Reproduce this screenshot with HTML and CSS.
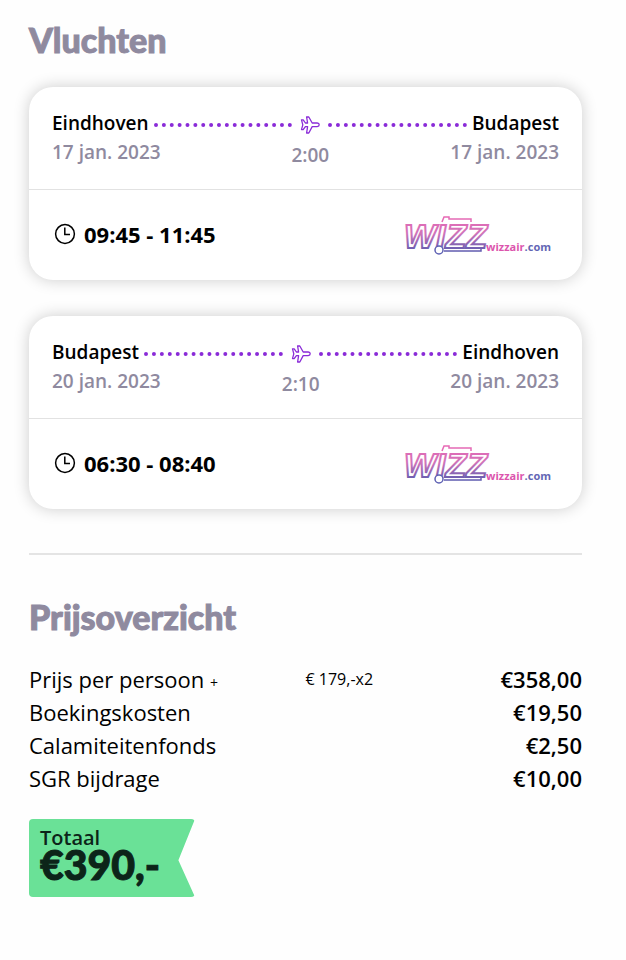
FILE: index.html
```html
<!DOCTYPE html>
<html lang="nl">
<head>
    <meta charset="UTF-8">
    <meta name="viewport" content="width=device-width, initial-scale=1.0">
    <title>Vluchten en prijsoverzicht</title>
    <link rel="stylesheet" href="styles.css">
</head>
<body>
    <!-- shared icons -->
    <svg class="sprite" aria-hidden="true">
        <defs>
            <linearGradient id="wizz-gradient" gradientUnits="userSpaceOnUse" x1="0" y1="0" x2="0" y2="44">
                <stop offset="0.1" stop-color="#e868b4"/>
                <stop offset="0.5" stop-color="#cf74ba"/>
                <stop offset="0.95" stop-color="#4f58ae"/>
            </linearGradient>
        </defs>
        <symbol id="icon-plane" viewBox="0 0 20 18">
            <path d="M1.5 3.8H3.2L5.4 7H7.6L6.6 1H8.8L12.2 7H17.2Q19.2 7.2 19.2 8.8Q19.2 10.4 17.2 10.6H12.2L8.8 17H6.6L7.6 10.6H5.4L3.2 13.6H1.5L2.8 8.8Z" fill="none" stroke="#8a2bd8" stroke-width="1.3" stroke-linejoin="round"/>
        </symbol>
        <symbol id="icon-clock" viewBox="0 0 22 22">
            <circle cx="11" cy="11" r="9.4" fill="none" stroke="#000" stroke-width="1.5"/>
            <path d="M10.8 4.6V11.6H16" fill="none" stroke="#000" stroke-width="1.5"/>
        </symbol>
        <symbol id="logo-wizz" viewBox="0 0 148 44">
            <path d="M38 10L40 5H45V7H67V10M40 36H77V39H40" fill="none" stroke="url(#wizz-gradient)" stroke-width="1.5"/>
            <text class="wizz-word" x="0" y="36">WIZZ</text>
            <circle cx="35" cy="38" r="4" fill="#fff" stroke="#5d60b3" stroke-width="1.5"/>
            <text class="wizz-site" x="147" y="39" text-anchor="end"><tspan fill="#dc55ad">wizzair</tspan><tspan fill="#6366b4">.com</tspan></text>
        </symbol>
    </svg>

    <main class="page">
        <section class="flights">
            <h2>Vluchten</h2>

            <article class="flight-card">
                <div class="flight-header">
                    <span class="city">Eindhoven</span>
                    <div class="route">
                        <div class="route-line">
                            <svg class="plane" aria-hidden="true"><use href="#icon-plane"/></svg>
                        </div>
                        <span class="duration">2:00</span>
                    </div>
                    <span class="city city-to">Budapest</span>
                    <div class="dates">
                        <span>17 jan. 2023</span>
                        <span>17 jan. 2023</span>
                    </div>
                </div>
                <div class="flight-body">
                    <svg class="clock" aria-hidden="true"><use href="#icon-clock"/></svg>
                    <span class="times">09:45 - 11:45</span>
                    <svg class="airline" role="img" aria-label="Wizz Air"><use href="#logo-wizz"/></svg>
                </div>
            </article>

            <article class="flight-card">
                <div class="flight-header">
                    <span class="city">Budapest</span>
                    <div class="route">
                        <div class="route-line">
                            <svg class="plane" aria-hidden="true"><use href="#icon-plane"/></svg>
                        </div>
                        <span class="duration">2:10</span>
                    </div>
                    <span class="city city-to">Eindhoven</span>
                    <div class="dates">
                        <span>20 jan. 2023</span>
                        <span>20 jan. 2023</span>
                    </div>
                </div>
                <div class="flight-body">
                    <svg class="clock" aria-hidden="true"><use href="#icon-clock"/></svg>
                    <span class="times">06:30 - 08:40</span>
                    <svg class="airline" role="img" aria-label="Wizz Air"><use href="#logo-wizz"/></svg>
                </div>
            </article>
        </section>

        <hr>

        <section class="prices">
            <h2>Prijsoverzicht</h2>

            <table class="price-table">
                <tr>
                    <th scope="row">Prijs per persoon <small>+</small></th>
                    <td class="detail">€ 179,-x2</td>
                    <td class="amount">€358,00</td>
                </tr>
                <tr>
                    <th scope="row">Boekingskosten</th>
                    <td class="detail"></td>
                    <td class="amount">€19,50</td>
                </tr>
                <tr>
                    <th scope="row">Calamiteitenfonds</th>
                    <td class="detail"></td>
                    <td class="amount">€2,50</td>
                </tr>
                <tr>
                    <th scope="row">SGR bijdrage</th>
                    <td class="detail"></td>
                    <td class="amount">€10,00</td>
                </tr>
            </table>

            <div class="total">
                <span class="total-label">Totaal</span>
                <strong class="total-price">€390,-</strong>
            </div>
        </section>
    </main>
</body>
</html>
```
FILE: styles.css
```css
* {
    margin: 0;
    padding: 0;
    box-sizing: border-box;
}

body {
    font-family: 'Open Sans', 'Noto Sans', sans-serif;
    background: #fefefe;
    color: #000;
}

.sprite {
    display: block;
    width: 0;
    height: 0;
}

.page {
    padding: 20px 44px 60px 29px;
}

h2 {
    font-family: 'Lato', sans-serif;
    font-size: 34px;
    font-weight: 900;
    line-height: 40px;
    color: #8f8a9f;
    -webkit-text-stroke: 1px #8f8a9f;
}

/* Flights */
.flight-card {
    margin-top: 36px;
    background: #fff;
    border-radius: 24px;
    box-shadow: 0 0 16px rgba(0, 0, 0, 0.2);
}

h2 + .flight-card {
    margin-top: 27px;
}

.flight-header {
    display: grid;
    grid-template-columns: auto 1fr auto;
    grid-template-rows: 29px 32px;
    column-gap: 5px;
    padding: 22px 23px 19px;
    border-bottom: 1px solid #e2e2e2;
    font-size: 19px;
    font-weight: 600;
    line-height: 29px;
}

.route {
    grid-column: 2;
    grid-row: 1 / 3;
    text-align: center;
    color: #8f8a9f;
}

.route-line {
    display: flex;
    align-items: center;
    gap: 8px;
    height: 32px;
}

.route-line::before,
.route-line::after {
    content: '';
    flex: 1;
    border-top: 4px dotted #8a2bd8;
}

.plane {
    width: 20px;
    height: 18px;
}

.duration {
    display: block;
}

.city {
    grid-row: 1;
}

.city-to {
    grid-column: 3;
}

.dates {
    grid-column: 1 / -1;
    grid-row: 2;
    display: flex;
    justify-content: space-between;
    color: #8f8a9f;
}

.flight-body {
    display: flex;
    align-items: center;
    height: 90px;
    padding: 0 30px 2px 25px;
}

.clock {
    width: 22px;
    height: 22px;
    margin-right: 8px;
}

.times {
    font-size: 22px;
    font-weight: 700;
}

.airline {
    width: 148px;
    height: 44px;
    margin-left: auto;
}

.wizz-word {
    font-family: 'Liberation Sans', sans-serif;
    font-size: 34px;
    font-style: italic;
    font-weight: 700;
    fill: #fff;
    stroke: url(#wizz-gradient);
    stroke-width: 2px;
}

.wizz-site {
    font-family: 'Open Sans', sans-serif;
    font-size: 11px;
    font-weight: 700;
}

hr {
    height: 2px;
    margin: 44px 0 42px;
    border: none;
    background: #e4e4e4;
}

/* Prices */
.price-table {
    width: 100%;
    margin-top: 26px;
    border-collapse: collapse;
    table-layout: fixed;
    font-size: 22px;
    line-height: 33px;
}

.price-table th {
    width: 50%;
    font-weight: 400;
    text-align: left;
}

.price-table small {
    font-size: 14px;
    line-height: 14px;
}

.detail {
    font-size: 16px;
}

.amount {
    font-weight: 600;
    text-align: right;
}

.total {
    display: flex;
    flex-direction: column;
    width: 166px;
    height: 78px;
    margin-top: 24px;
    padding: 8px 11px;
    background: #6ae197;
    border-radius: 4px;
    clip-path: polygon(0 0, 100% 0, 90% 53%, 100% 100%, 0 100%);
    color: #0c2419;
}

.total-label {
    font-size: 20px;
    font-weight: 600;
    line-height: 22px;
}

.total-price {
    font-family: 'Lato', sans-serif;
    font-size: 41px;
    font-weight: 900;
    line-height: 32px;
    -webkit-text-stroke: 1px #0c2419;
}
```
